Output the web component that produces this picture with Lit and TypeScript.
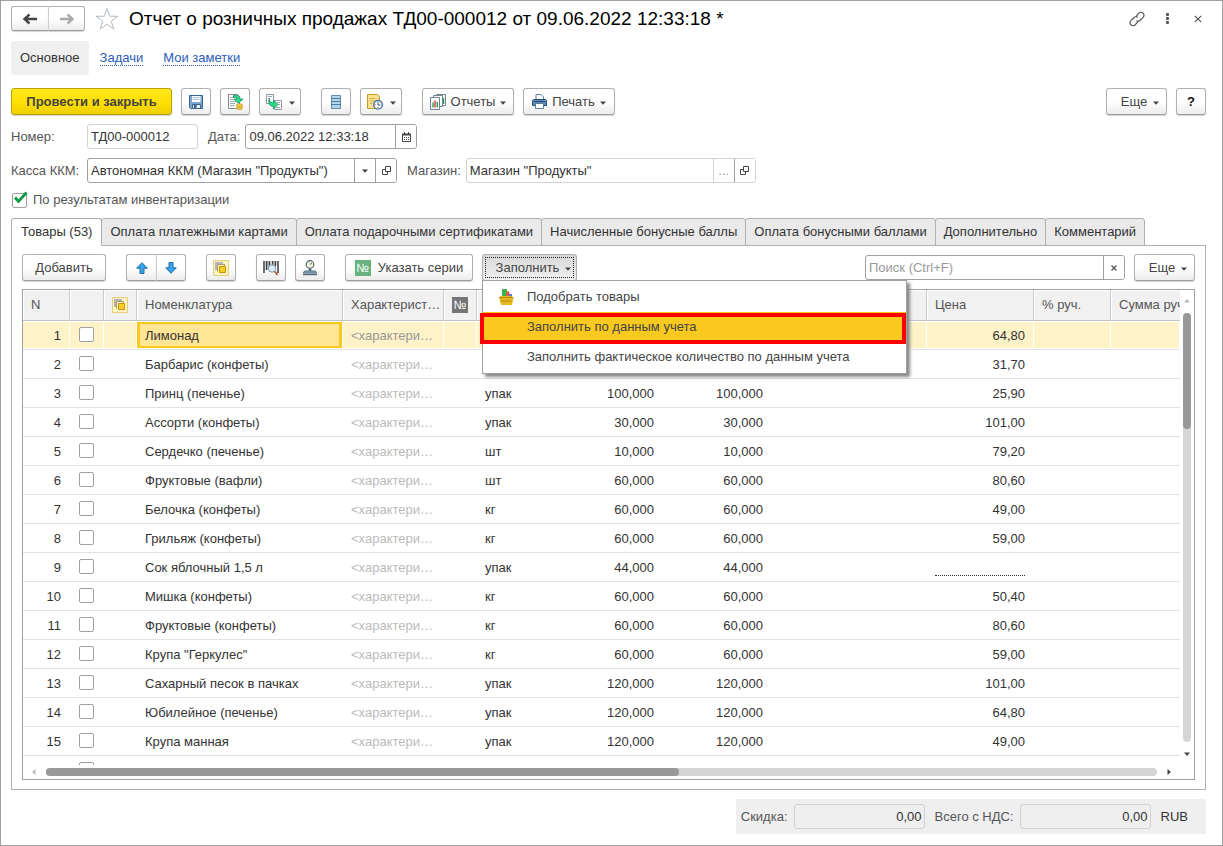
import { LitElement, html, svg, css } from "lit";
import { customElement, state } from "lit/decorators.js";
import { classMap } from "lit/directives/class-map.js";

interface Row {
  name: string;
  unit: string;
  qty: string;
  price: string;
}

const row = (name: string, unit: string, qty: string, price: string): Row => ({ name, unit, qty, price });

const ROWS: Row[] = [
  row("Лимонад", "", "", "64,80"),
  row("Барбарис (конфеты)", "", "", "31,70"),
  row("Принц (печенье)", "упак", "100,000", "25,90"),
  row("Ассорти (конфеты)", "упак", "30,000", "101,00"),
  row("Сердечко (печенье)", "шт", "10,000", "79,20"),
  row("Фруктовые (вафли)", "шт", "60,000", "80,60"),
  row("Белочка (конфеты)", "кг", "60,000", "49,00"),
  row("Грильяж (конфеты)", "кг", "60,000", "59,00"),
  row("Сок яблочный 1,5 л", "упак", "44,000", ""),
  row("Мишка (конфеты)", "кг", "60,000", "50,40"),
  row("Фруктовые (конфеты)", "кг", "60,000", "80,60"),
  row('Крупа "Геркулес"', "кг", "60,000", "59,00"),
  row("Сахарный песок в пачках", "упак", "120,000", "101,00"),
  row("Юбилейное (печенье)", "упак", "120,000", "64,80"),
  row("Крупа манная", "упак", "120,000", "49,00"),
];

const TABS = [
  "Товары (53)",
  "Оплата платежными картами",
  "Оплата подарочными сертификатами",
  "Начисленные бонусные баллы",
  "Оплата бонусными баллами",
  "Дополнительно",
  "Комментарий",
];

const icon = (body: unknown, w = 16, h = 16) =>
  html`<svg class="icon" width=${w} height=${h} viewBox="0 0 ${w} ${h}" aria-hidden="true">${body}</svg>`;

const caret = html`<svg class="caret" width="6" height="4" viewBox="0 0 6 4" aria-hidden="true"><path d="M0 .5h6L3 3.8z" fill="#444"/></svg>`;

const icons = {
  back: icon(svg`<path d="M7.5 1.5 2.5 6l5 4.500M3 6h12" fill="none" stroke="#444" stroke-width="2.400"/>`, 16, 12),
  forward: icon(svg`<path d="M8.500 1.500 13.500 6l-5 4.500M13 6H1" fill="none" stroke="#aaa" stroke-width="2.400"/>`, 16, 12),
  star: icon(svg`<path d="M12 1.500 14.700 9.200 22.800 9.300 16.300 14.200 18.700 22 12 17.300 5.300 22 7.700 14.200 1.200 9.300 9.300 9.200z" fill="#fff" stroke="#b3bac0"/>`, 24, 24),
  link: icon(svg`<g fill="none" stroke="#555" stroke-width="1.200" stroke-linecap="round"><path d="M7.200 5.300 9.800 2.200a2.900 2.900 0 0 1 4.300 0 2.900 2.900 0 0 1 0 4.200L11 9.500a2.900 2.900 0 0 1-3.200.4"/><path d="M8.800 10.800 6.200 13.800a2.900 2.900 0 0 1-4.300 0 2.900 2.900 0 0 1 0-4.200L5 6.500a2.900 2.900 0 0 1 3.200-.4"/></g>`),
  more: icon(svg`<g fill="#555"><rect x="2" y="0" width="3" height="3" rx="1"/><rect x="2" y="4" width="3" height="3" rx="1"/><rect x="2" y="8" width="3" height="3" rx="1"/></g>`, 7, 11),
  close: icon(svg`<path d="M.8.8l6.400 6.400M7.200.8.8 7.200" stroke="#555" stroke-width="1.200"/>`, 8, 8),
  clear: icon(svg`<path d="M.5.5l5 5M5.500.5l-5 5" stroke="#555" stroke-width="1.200"/>`, 6, 6),
  save: icon(svg`<path d="M1.500 1.500h13v13h-12l-1-1z" fill="#7ba6cf" stroke="#3c648c"/><path d="M4 2h8.500v6H4z" fill="#fff"/><path d="M5 3.500h6.500M5 5.500h6.500" stroke="#a9bdd0"/><path d="M4.500 10.500h8v4h-8z" fill="#e4ebf2" stroke="#3c648c"/><path d="M6 11h2.500v3H6z" fill="#3c648c"/>`),
  post: icon(svg`<path d="M1.500.5h9l2 2v12h-11z" fill="#fff" stroke="#7f8d99"/><path d="M3 3.500h4M3 5.500h4M3 7.500h6M3 9.500h5M3 11.500h5" stroke="#9aa8b3"/><path d="M6.500 1.500c4-1 6.500.5 6.500 3.500h3l-4.700 4.500L7 5h2.800c0-1-1-1.800-3.300-1.500z" fill="#2bd98b" stroke="#0b8a50" stroke-width=".7"/><g fill="#f7d24c" stroke="#c0921b" stroke-width=".7"><ellipse cx="12.500" cy="14.300" rx="3" ry="1.300"/><ellipse cx="12.500" cy="12.600" rx="3" ry="1.300"/><ellipse cx="12.500" cy="11" rx="3" ry="1.300"/></g>`, 17, 16),
  create: icon(svg`<path d="M.5.500h7v9h-7z" fill="#fff" stroke="#8b99a5"/><path d="M2 2.500h4M2 4.500h2M2 6.500h2" stroke="#9aa8b3"/><path d="M8.500 6.500h7v9h-7z" fill="#fff" stroke="#8b99a5"/><path d="M11 8.500h3M12 10.500h2M10 13.500h4" stroke="#9aa8b3"/><path d="M3.500 4.500c0 3.500 1 4 4 4V6l4.500 4.500L7.500 15v-2.700c-4 0-5.500-2.300-4-7.800z" fill="#2bd98b" stroke="#0b8a50" stroke-width=".7"/>`),
  list: icon(svg`<path d="M.5.500h9v13h-9z" fill="#b5d5ec" stroke="#6b8ca8"/><path d="M0 3.500h10M0 6.500h10M0 9.500h10" stroke="#4a7ba5"/>`, 10, 14),
  history: icon(svg`<path d="M.500.500h10l2 2v12H.500z" fill="#f9e08c" stroke="#c79d33"/><path d="M2.500 4.500h6M2.500 7h5M2.500 9.500h3" stroke="#d7b04b"/><circle cx="11" cy="10.800" r="4.300" fill="#fff" stroke="#3e76ad" stroke-width="1.400"/><path d="M11 8v3h2.500" fill="none" stroke="#33557a"/><path d="M7.700 10.800h1M11 14v-1M13.500 8.300l-.6.6" stroke="#e33"/>`),
  reports: icon(svg`<path d="M6.500.500h9v11h-9z" fill="#fff" stroke="#72828f"/><path d="M13.500 4v6" stroke="#2aa05a" stroke-width="1.500"/><path d="M3.500 1.500h9v11h-9z" fill="#fff" stroke="#72828f"/><path d="M.500 3.500h9v12h-9z" fill="#fff" stroke="#72828f"/><path d="M3 13.500V8.500" stroke="#2aa05a" stroke-width="1.400"/><path d="M5 13.500V6.500" stroke="#e02d2d" stroke-width="1.400"/><path d="M7.300 13.500V8" stroke="#2aa05a" stroke-width="1.400"/>`),
  print: icon(svg`<path d="M4 6V.500h5l2.500 2.500V6" fill="#fff" stroke="#5f7f9e"/><path d="M1.500 5.500h12l1 1v5h-14v-5z" fill="#5c8ab5" stroke="#264d73"/><path d="M2 7.500h11" stroke="#264d73"/><path d="M3.500 9.500h8v5h-8z" fill="#fff" stroke="#5f7f9e"/>`, 15, 15),
  calendar: icon(svg`<path d="M.500 2.500h8v7h-8z" fill="none" stroke="#444"/><path d="M0 1.500h9v2H0zM2 0h1v2H2zM6 0h1v2H6z" fill="#444"/><path d="M2 5.500h5M2 7.500h5" stroke="#444" stroke-dasharray="1 1"/>`, 9, 10),
  open: icon(svg`<path d="M3.500.500h5v5h-5z" fill="none" stroke="#444"/><path d="M3 3.500H.500v5h5V6" fill="none" stroke="#444"/>`, 9, 9),
  up: icon(svg`<path d="M6 .700 11.300 6.200H8v5.300H4V6.200H.700z" fill="#38a3e8" stroke="#1b6fa8"/>`, 12, 12),
  down: icon(svg`<path d="M6 11.300 11.300 5.800H8V.500H4v5.300H.700z" fill="#38a3e8" stroke="#1b6fa8"/>`, 12, 12),
  copies: icon(svg`<path d="M.500.500h15v15H.500z" fill="#fdf3c4" stroke="#e6cf7c"/><path d="M2 2h8v2H4v6H2z" fill="#b5b5b5"/><path d="M4.500 11.500v-7h7v2" fill="none" stroke="#a89a6a"/><path d="M6.500 6.500h6v6h-6z" fill="#f9cf22" stroke="#c8930f"/>`),
  barcode: icon(svg`<path d="M1 1v12M3.500 1v9M6.500 1v5M9.500 1v4M12.500 1v5M15 1v12" stroke="#3d3d3d" stroke-width="1.500"/><path d="M5 1v8M11 1v4" stroke="#666" stroke-width=".8"/><circle cx="9" cy="8.500" r="3.700" fill="#dcecf9" stroke="#7d96ad"/><path d="M11.800 11.500 14.500 15" stroke="#b5643b" stroke-width="2"/>`),
  scales: icon(svg`<circle cx="8" cy="4.500" r="3.800" fill="#f7f3d0" stroke="#4b6a80" stroke-width="1.200"/><path d="M8 4.500 10 3" stroke="#4b6a80"/><path d="M6.800 8.500h2.400v3H6.800z" fill="#4b6a80"/><path d="M1.500 13c0-1.500 1-2 2.500-2h8c1.500 0 2.500.5 2.500 2z" fill="#9fb8c9" stroke="#4b6a80"/><path d="M1 14.500h14" stroke="#4b6a80" stroke-width="1.400"/>`),
  basket: icon(svg`<path d="M3.500.300h4v9h-4z" fill="#2bc043" stroke="#13802a" stroke-width=".6"/><path d="M7 2.500h3l1 5H7z" fill="#ee5348"/><path d="M10 5h3v4h-3z" fill="#5480e0"/><path d="M0 8.500 2 7h10l2.500 1.500-1.500 7.500H2z" fill="#e7b91f"/><path d="M0 8.500h14.500M2 12h10.500" stroke="#b88a10"/>`, 15, 16),
};

const arrow = (d: string, color: string) =>
  html`<svg class="arrow" width="6" height="6" viewBox="0 0 6 6" aria-hidden="true"><path d=${d} fill=${color}/></svg>`;

@customElement("app-root")
export class AppRoot extends LitElement {
  @state() private tab = 0;

  static styles = css`
    :host {
      display: flex;
      flex-direction: column;
      box-sizing: border-box;
      height: 100vh;
      min-height: 480px;
      padding: 5px 16px 11px 10px;
      border: 1px solid #a0a0a0;
      background: #fff;
      color: #333;
      font: 13px/16px "Liberation Sans", Arial, sans-serif;
    }
    * { box-sizing: border-box; }
    button, input { font: inherit; color: inherit; margin: 0; }
    button { cursor: pointer; }
    .icon, .caret, .arrow { display: block; flex: none; }

    .header { display: flex; align-items: center; height: 25px; padding-right: 4px; }
    .group { display: flex; }
    .group .btn:first-child { border-radius: 3px 0 0 3px; border-right: 0; }
    .group .btn:last-child { border-radius: 0 3px 3px 0; border-left-color: #ccc; }
    .header .btn { width: 37px; height: 25px; }
    .title { flex: 1; margin: 0 0 0 10px; font-size: 19px; line-height: 24px; font-weight: 400; color: #000; }
    .plain { display: flex; align-items: center; justify-content: center; border: 0; padding: 0; background: none; }
    .star { margin-left: 10px; }
    .window { display: flex; align-items: center; gap: 19px; }
    .window .plain:last-child { margin-left: 4px; }

    .nav { display: flex; align-items: center; gap: 20px; margin-top: 10px; height: 34px; }
    .nav .current { padding: 9px 9px; border-radius: 3px; background: #f0f0f0; margin-right: -9px; }
    .nav a { color: #2b5cb8; text-decoration: none; border-bottom: 1px dotted #2b5cb8; line-height: 14px; }

    .bar { display: flex; align-items: center; gap: 9px; height: 27px; }
    .commands { margin-top: 13px; }
    .gap { margin-left: 11px; }
    .push { margin-left: auto; }
    .btn {
      display: flex; align-items: center; justify-content: center; gap: 6px; flex: none;
      height: 27px; padding: 0; border: 1px solid #b0b0b0; border-bottom-color: #9c9c9c; border-radius: 3px;
      background: linear-gradient(#fff 50%, #ececec); color: #444; white-space: nowrap;
      box-shadow: 0 1px 1px #d4d4d4;
    }
    .btn.square { width: 30px; }
    .btn.drop { width: 42px; gap: 7px; }
    .btn.add { width: 84px; }
    .btn.report { width: 92px; gap: 5px; }
    .btn.series { width: 128px; gap: 7px; }
    .btn.more { width: 61px; padding-left: 7px; }
    .btn.pressed { width: 95px; padding-left: 8px; }
    .btn .caret { margin-top: 2px; }
    .btn.primary {
      width: 161px; border-color: #b8a200; color: #444; font-weight: 700;
      background: linear-gradient(#ffe81f, #ffdf00 55%, #efcf00);
    }
    .btn.help { font-weight: 700; color: #111; }
    .btn.pressed { background: linear-gradient(#d8d8d8, #f0f0f0); outline: 1px dotted #222; outline-offset: -4px; }
    .num { width: 16px; height: 16px; background: #67b27c; color: #fff; font-size: 12px; line-height: 16px; text-align: center; }
    .num.grey { background: #757575; margin: 0 auto; }

    .fields { display: flex; align-items: center; color: #555; margin-top: 9px; }
    .fields .caption { width: 76px; }
    .fields .caption2 { margin: 0 5px 0 10px; }
    .field {
      display: flex; height: 25px; border: 1px solid #a0a0a0; border-radius: 3px; background: #fff; color: #333; overflow: hidden;
    }
    .field.pale { border-color: #d2d2d2; }
    .field input { flex: 1; min-width: 0; width: 100%; border: 0; padding: 0 3px; background: none; outline: none; }
    .field input::placeholder { color: #999; }
    .field button { width: 21px; border: 0; border-left: 1px solid #a0a0a0; padding: 0; background: #fff; display: flex; align-items: center; justify-content: center; flex: none; }
    .field .faint { border-left-color: #d2d2d2; color: #999; }
    .w-num { width: 111px; }
    .w-date { width: 172px; }
    .w-kkm { width: 310px; }
    .w-shop { width: 290px; }

    .check { display: flex; align-items: center; gap: 6px; color: #555; margin-top: 9px; height: 16px; }
    .box {
      appearance: none; display: block; width: 15px; height: 15px; border: 1px solid #a0a0a0; border-radius: 2px; background: #fff;
    }
    .tick { position: relative; display: block; padding-left: 1px; }
    .tick svg { position: absolute; left: 2px; top: -2px; pointer-events: none; }

    .tabs { display: flex; margin-top: 10px; }
    .tab {
      height: 28px; padding: 0 8px; border: 1px solid #b0b0b0; border-radius: 3px 3px 0 0; margin-right: -1px;
      background: #eaeaea; color: #333; white-space: nowrap;
    }
    .tab:first-child { padding: 0 9px; }
    .tab.active { background: #fff; border-bottom-color: #fff; position: relative; z-index: 1; }
    .panel {
      flex: 1; min-height: 0; display: flex; flex-direction: column; margin-top: -1px; padding: 8px 10px 9px;
      border: 1px solid #b0b0b0;
    }

    .fill { position: relative; }
    .menu {
      position: absolute; z-index: 5; left: 0; top: 26px; width: 425px; margin: 0; padding: 0 0 1px;
      border: 1px solid #a0a0a0; background: #fff; box-shadow: 3px 3px 3px #888;
    }
    .item {
      position: relative; display: flex; align-items: center; width: 100%; height: 30px; padding: 0 0 0 44px;
      border: 0; background: none; color: #444; text-align: left;
    }
    .item:first-child { height: 31px; }
    .item.hot { background: #f9c91f; }
    .item.hot::after { content: ""; position: absolute; inset: 1px 0 -2px -3px; border: 4px solid #f00; }
    .item .icon { margin: 0 13px 0 -28px; }
    .search { width: 260px; }

    .grid {
      flex: 1; min-height: 0; margin-top: 8px; border: 1px solid #a0a0a0; display: grid;
      grid-template-columns: minmax(0, 1fr) 14px; grid-template-rows: minmax(0, 1fr) 14px;
    }
    .view { overflow: hidden; }
    table { width: 100%; table-layout: fixed; border-collapse: separate; border-spacing: 0; }
    th, td { padding: 0 8px; white-space: nowrap; overflow: hidden; text-align: left; }
    th {
      height: 31px; font-weight: 400; color: #555; background: #f1f1f1;
      border-right: 1px solid #ccc; border-bottom: 1px solid #c4c4c4; box-shadow: inset 1px 1px #fff;
    }
    td { height: 29px; padding-top: 2px; border-bottom: 1px solid #e2e2e2; }
    th:last-child { border-right: 0; }
    .c-n { width: 47px; } .c-box { width: 34px; } .c-ico { width: 33px; } .c-name { width: 206px; }
    .c-char { width: 101px; } .c-ser { width: 33px; } .c-unit { width: 77px; } .c-qty { width: 109px; }
    .c-fact { width: 109px; } .c-acc { width: 155px; } .c-price { width: 107px; } .c-pct { width: 77px; }
    td.r { text-align: right; padding-right: 9px; }
    td.pick { padding: 0 9px 2px; }
    td.char { color: #bbb; }
    .sel td { background: #fdf2c8; border-right: 1px solid #fff; box-shadow: inset 0 1px #fff, inset 0 -1px #fff; }
    .sel td.char { color: #999; }
    .sel td.r { padding-right: 8px; }
    .sel td.cell { box-shadow: inset 0 1px #fff, inset 0 -1px #fff, inset 0 0 0 3px #f9c91f; background: #ffe594; }
    .empty { display: block; height: 16px; border-bottom: 1px dotted #333; }
    .mid .icon { margin: 0 auto; }

    .vscroll { display: flex; flex-direction: column; align-items: center; padding: 8px 0 8px; gap: 9px; }
    .hscroll { display: flex; align-items: center; padding: 0 8px; gap: 9px; }
    .track { flex: 1; background: #d5d5d5; border-radius: 4px; }
    .thumb { background: #999; border-radius: 4px; }
    .vscroll .track, .vscroll .thumb { width: 8px; }
    .hscroll .track, .hscroll .thumb { height: 8px; }

    .totals {
      display: flex; align-items: center; align-self: flex-end; height: 35px; margin-top: 9px; padding: 0 18px 0 5px;
      background: #efefef; color: #555;
    }
    .totals .field { width: 131px; background: none; border-color: #d2d2d2; }
    .totals input { text-align: right; padding: 0 2px; }
    .totals .lead { margin-right: 6px; }
    .totals .next { margin: 0 6px 0 10px; }
    .totals .cur { margin-left: 10px; color: #333; }
  `;

  private renderRow(r: Row, i: number) {
    return html`<tr class=${classMap({ sel: i === 0 })}>
      <td class="r">${i + 1}</td>
      <td class="pick"><input class="box" type="checkbox" aria-label="Строка ${i + 1}" /></td>
      <td></td>
      <td class="cell">${r.name}</td>
      <td class="char">&lt;характери…</td>
      <td></td>
      <td>${r.unit}</td>
      <td class="r">${r.qty}</td>
      <td class="r">${r.qty}</td>
      <td></td>
      <td class="r">${r.price === "" ? html`<span class="empty"></span>` : r.price}</td>
      <td></td>
      <td></td>
    </tr>`;
  }

  render() {
    return html`
      <header class="header">
        <div class="group">
          <button class="btn" aria-label="Назад">${icons.back}</button>
          <button class="btn" aria-label="Вперед">${icons.forward}</button>
        </div>
        <button class="plain star" aria-label="В избранное">${icons.star}</button>
        <h1 class="title">Отчет о розничных продажах ТД00-000012 от 09.06.2022 12:33:18 *</h1>
        <div class="window">
          <button class="plain" aria-label="Получить ссылку">${icons.link}</button>
          <button class="plain" aria-label="Меню">${icons.more}</button>
          <button class="plain" aria-label="Закрыть">${icons.close}</button>
        </div>
      </header>

      <nav class="nav">
        <span class="current">Основное</span>
        <a href="#tasks">Задачи</a>
        <a href="#notes">Мои заметки</a>
      </nav>

      <div class="bar commands">
        <button class="btn primary">Провести и закрыть</button>
        <button class="btn square" aria-label="Записать">${icons.save}</button>
        <button class="btn square" aria-label="Провести">${icons.post}</button>
        <button class="btn drop" aria-label="Создать на основании">${icons.create}${caret}</button>
        <button class="btn square gap" aria-label="Реестр">${icons.list}</button>
        <button class="btn drop" aria-label="История">${icons.history}${caret}</button>
        <button class="btn report gap">${icons.reports}Отчеты${caret}</button>
        <button class="btn report">${icons.print}Печать${caret}</button>
        <button class="btn more push">Еще${caret}</button>
        <button class="btn square help" aria-label="Справка">?</button>
      </div>

      <div class="fields">
        <label class="caption" for="num">Номер:</label>
        <div class="field pale w-num"><input id="num" .value=${"ТД00-000012"} /></div>
        <label class="caption2" for="date">Дата:</label>
        <div class="field w-date">
          <input id="date" .value=${"09.06.2022 12:33:18"} />
          <button aria-label="Выбрать дату">${icons.calendar}</button>
        </div>
      </div>
      <div class="fields">
        <label class="caption" for="kkm">Касса ККМ:</label>
        <div class="field w-kkm">
          <input id="kkm" .value=${'Автономная ККМ (Магазин "Продукты")'} />
          <button aria-label="Выбрать кассу">${caret}</button>
          <button aria-label="Открыть кассу">${icons.open}</button>
        </div>
        <label class="caption2" for="shop">Магазин:</label>
        <div class="field pale w-shop">
          <input id="shop" .value=${'Магазин "Продукты"'} readonly />
          <button class="faint" aria-label="Выбрать магазин">...</button>
          <button aria-label="Открыть магазин">${icons.open}</button>
        </div>
      </div>
      <label class="check">
        <span class="tick">
          <input class="box" type="checkbox" checked />
          <svg width="15" height="13" viewBox="0 0 15 13" aria-hidden="true"><path d="M2 6.500 5.500 10.500 13.500 1.500" fill="none" stroke="#0d9a48" stroke-width="2.800"/></svg>
        </span>
        По результатам инвентаризации
      </label>

      <div class="tabs" role="tablist">
        ${TABS.map(
          (t, i) => html`<button
            class=${classMap({ tab: true, active: i === this.tab })}
            role="tab"
            aria-selected=${i === this.tab}
            @click=${() => (this.tab = i)}
          >${t}</button>`
        )}
      </div>

      <section class="panel">
        <div class="bar">
          <button class="btn add">Добавить</button>
          <div class="group gap">
            <button class="btn square" aria-label="Переместить вверх">${icons.up}</button>
            <button class="btn square" aria-label="Переместить вниз">${icons.down}</button>
          </div>
          <button class="btn square gap" aria-label="Упаковки">${icons.copies}</button>
          <button class="btn square gap" aria-label="Поиск по штрихкоду">${icons.barcode}</button>
          <button class="btn square" aria-label="Получить вес">${icons.scales}</button>
          <button class="btn series gap"><span class="num">№</span>Указать серии</button>
          <div class="fill">
            <button class="btn pressed" aria-haspopup="menu" aria-expanded="true">Заполнить${caret}</button>
            <div class="menu" role="menu">
              <button class="item" role="menuitem">${icons.basket}Подобрать товары</button>
              <button class="item hot" role="menuitem">Заполнить по данным учета</button>
              <button class="item" role="menuitem">Заполнить фактическое количество по данным учета</button>
            </div>
          </div>
          <div class="field search push">
            <input type="text" placeholder="Поиск (Ctrl+F)" aria-label="Поиск" />
            <button aria-label="Очистить">${icons.clear}</button>
          </div>
          <button class="btn more">Еще${caret}</button>
        </div>

        <div class="grid">
          <div class="view">
            <table>
              <thead>
                <tr>
                  <th class="c-n">N</th>
                  <th class="c-box"></th>
                  <th class="c-ico mid">${icons.copies}</th>
                  <th class="c-name">Номенклатура</th>
                  <th class="c-char">Характерист…</th>
                  <th class="c-ser mid"><div class="num grey">№</div></th>
                  <th class="c-unit"></th>
                  <th class="c-qty"></th>
                  <th class="c-fact"></th>
                  <th class="c-acc"></th>
                  <th class="c-price">Цена</th>
                  <th class="c-pct">% руч.</th>
                  <th>Сумма руч.</th>
                </tr>
              </thead>
              <tbody>
                ${ROWS.map((r, i) => this.renderRow(r, i))}
                <tr>
                  <td></td>
                  <td class="pick"><input class="box" type="checkbox" aria-label="Строка ${ROWS.length + 1}" /></td>
                  <td colspan="11"></td>
                </tr>
              </tbody>
            </table>
          </div>
          <div class="vscroll">
            ${arrow("M0 4.500h6L3 1z", "#bbb")}
            <div class="track"><div class="thumb" style="height:27%"></div></div>
            ${arrow("M0 1.500h6L3 5z", "#444")}
          </div>
          <div class="hscroll">
            ${arrow("M4.500 0v6L1 3z", "#bbb")}
            <div class="track"><div class="thumb" style="width:57%"></div></div>
            ${arrow("M1.500 0v6L5 3z", "#444")}
          </div>
        </div>
      </section>

      <footer class="totals">
        <label class="lead" for="disc">Скидка:</label>
        <div class="field"><input id="disc" .value=${"0,00"} readonly /></div>
        <label class="next" for="total">Всего с НДС:</label>
        <div class="field"><input id="total" .value=${"0,00"} readonly /></div>
        <span class="cur">RUB</span>
      </footer>
    `;
  }
}
